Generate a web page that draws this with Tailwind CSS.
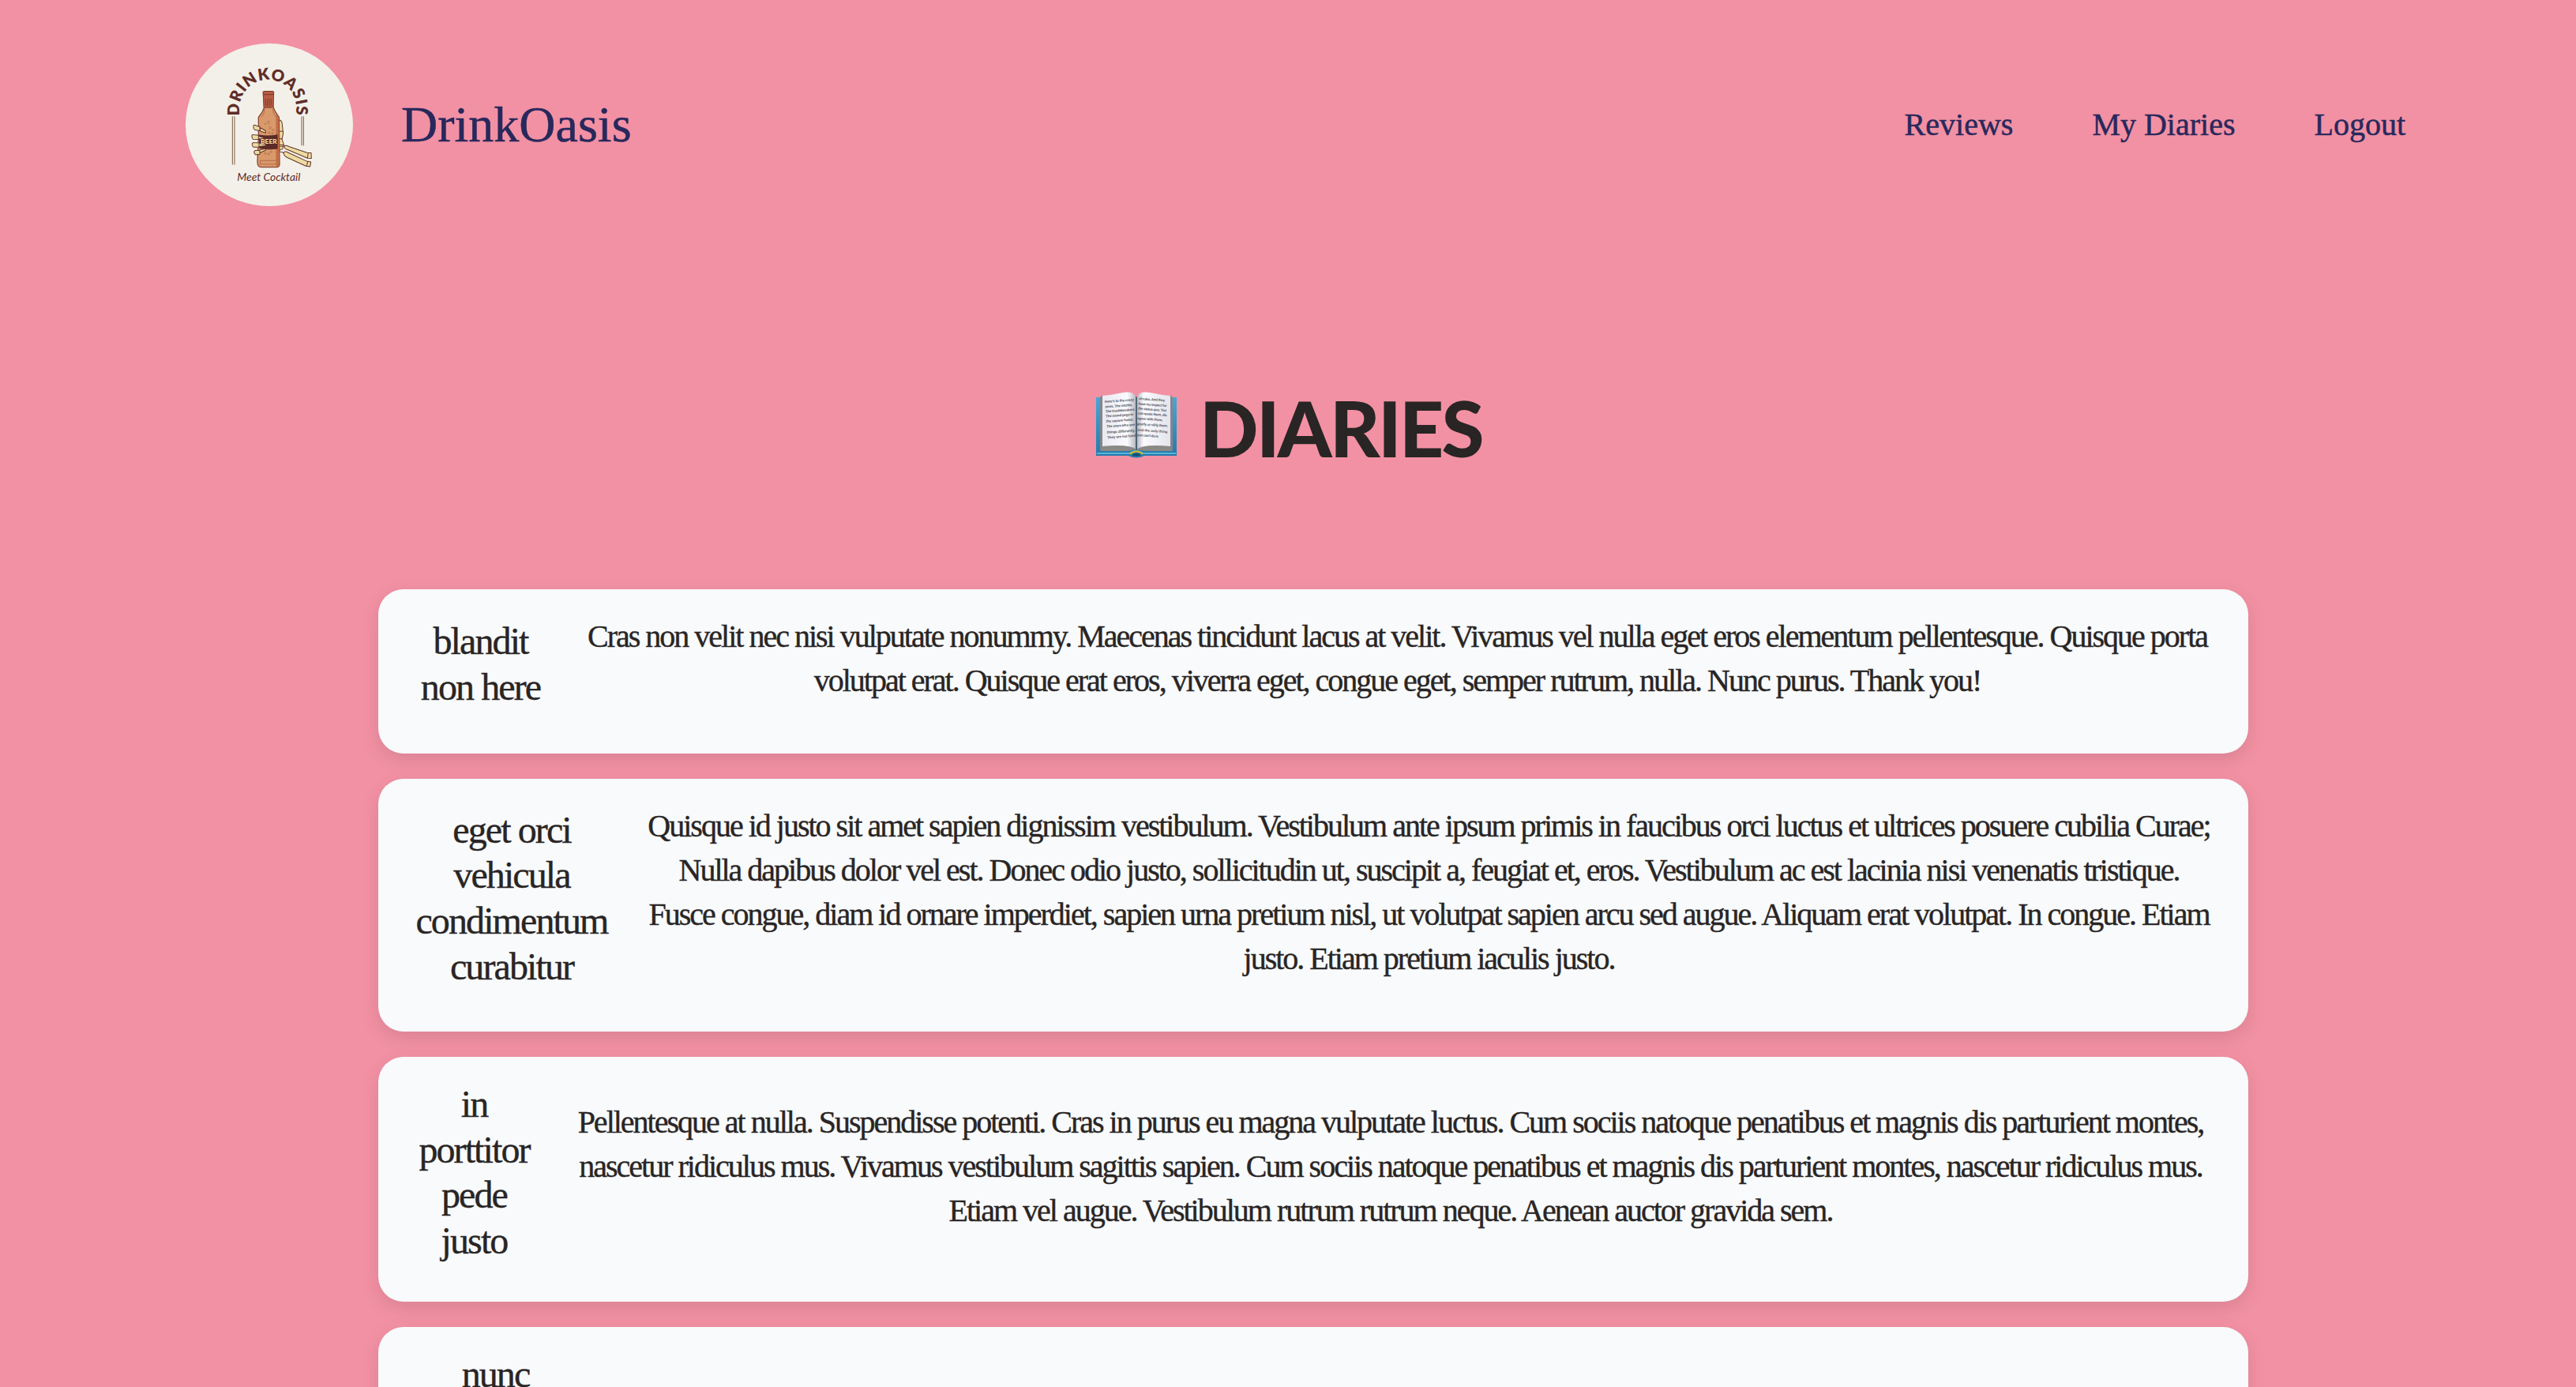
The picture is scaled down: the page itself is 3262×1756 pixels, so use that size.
<!DOCTYPE html>
<html lang="en">
<head>
<meta charset="utf-8">
<title>DrinkOasis</title>
<script src="https://cdn.jsdelivr.net/npm/@tailwindcss/browser@4"></script>
</head>
<body class="h-screen overflow-hidden bg-[#f291a3] font-['Liberation_Serif',serif] text-[#292524]">
<header class="flex h-[316px] items-center justify-between pl-[235px] pr-[216px] text-[#28285c] [-webkit-text-stroke:0.5px_#28285c]">
  <a class="flex items-center gap-[61px]">
    <svg class="h-[206px] w-[212px] [-webkit-text-stroke:0]" viewBox="46 45 636 617" preserveAspectRatio="none">
      <ellipse cx="364" cy="353.500" rx="318" ry="308.500" fill="#f3f0e9"/>
      <path id="arc" d="M251 319V291A108 108 0 0 1 467 291V319" fill="none"/>
      <text font-family="Lato" font-weight="800" font-size="61" fill="#5f2d28" textLength="392"><textPath href="#arc" textLength="392">DRINKOASIS</textPath></text>
      <g stroke="#7d5d45" stroke-width="3"><path d="M224 321V505M232 321V505M487 321V432M494 321V432"/></g>
      <g stroke="#63322b" stroke-width="3" stroke-linejoin="round" stroke-linecap="round">
        <path d="M400 335C408 336 413 343 413 352L417 386 412 408 419 428 414 446 400 450Z" fill="#ecdcA1"/>
        <path d="M402 378H415M402 407H413M403 430H418" fill="none"/>
        <path d="M421 434Q428 430 438 436L507 459 523 460 524 481 509 480 432 447Q420 444 421 434Z" fill="#ecdca1"/>
        <path d="M418 459Q425 452 436 459L505 491 522 494 519 512 503 510 431 477Q419 471 418 459Z" fill="#ecdca1"/>
        <path d="M401 437L421 434M402 455L418 459M512 460L509 479M510 493L506 510" fill="none"/>
        <path d="M341 239L345 286 338 304 323 325 323 400 319 492Q319 513 331 514H393Q404 513 403 500L401 325 387 304 379 286 379 239Z" fill="#d9996a" stroke="#8d4633" stroke-width="4"/>
        <path d="M390 312L400 328 402 500Q400 512 392 512L389 500V330Z" fill="#b9633f" stroke="none" opacity=".75"/>
        <path d="M341 237L343 286Q361 291 379 286L381 237Z" fill="#b65b42" stroke="#8d4633"/>
        <rect x="340" y="226" width="41" height="13" rx="5" fill="#b65b42" stroke="#7b382d"/>
        <path d="M350 256V280M357 256V282M364 256V282M371 256V280" stroke-width="2"/>
        <path d="M347 292Q347 308 335 324M376 292Q378 310 388 322M331 489H388M331 489L329 503H390" stroke="#9d593d" stroke-width="2" fill="none"/>
        <path d="M325 391Q360 398 396 390V445Q360 450 326 443Z" fill="#5c2b26" stroke="none"/>
        <path d="M304 357Q308 352 315 357L328 361 330 377 308 372Q302 366 304 357ZM328 364L350 376 350 384 328 377ZM298 393Q302 389 309 392L323 393V409L302 408Q296 401 298 393ZM323 397L342 402 341 407 323 407ZM299 424Q304 419 311 422L325 422V438L303 438Q297 431 299 424ZM325 424L350 427V433L325 436ZM307 454Q311 449 317 451L328 451V465L312 467Q305 462 307 454ZM328 449L350 444 350 450 328 460Z" fill="#ecdca1"/>
      </g>
      <g fill="#e8b984" stroke="#9d593d" stroke-width="2"><circle cx="361" cy="344" r="4"/><circle cx="349" cy="350" r="2"/><circle cx="367" cy="365" r="4"/><circle cx="379" cy="373" r="3"/><circle cx="364" cy="384" r="3"/><circle cx="376" cy="386" r="3"/><circle cx="371" cy="456" r="3"/><circle cx="361" cy="464" r="3"/><circle cx="349" cy="462" r="3"/></g>
      <text x="331" y="426" font-family="Lato" font-weight="900" font-size="24" fill="#ecdca1" textLength="62" lengthAdjust="spacingAndGlyphs">BEER</text>
      <text x="242" y="567" font-family="Lato" font-weight="400" font-style="italic" font-size="40" fill="#5f2d28" textLength="240" lengthAdjust="spacingAndGlyphs">Meet Cocktail</text>
    </svg>
    <span class="text-[64px] leading-[76px]">DrinkOasis</span>
  </a>
  <nav class="flex gap-[100px] text-[40px] leading-[56px]">
    <a>Reviews</a><a>My Diaries</a><a>Logout</a>
  </nav>
</header>

<main class="flex flex-col">
  <h1 class="flex h-[430px] items-start gap-[29px] pt-[180px] pl-[1388px] font-['Lato',sans-serif] text-[98px] leading-[82px] font-black tracking-[-2.7px]">
    <svg class="h-[84px] w-[102px] tracking-normal" viewBox="0 0 102 84">
      <defs>
        <linearGradient id="cover" x2="0" y2="1"><stop stop-color="#46a8d8"/><stop offset="1" stop-color="#2279a8"/></linearGradient>
        <linearGradient id="left"><stop stop-color="#e9e9f0"/><stop offset=".75" stop-color="#fafaff"/><stop offset="1" stop-color="#b9b9c2"/></linearGradient>
        <linearGradient id="right"><stop stop-color="#b9b9c2"/><stop offset=".2" stop-color="#fafaff"/><stop offset="1" stop-color="#e4e4ec"/></linearGradient>
      </defs>
      <path d="M0 7H102V81H61Q51 86 41 81H0Z" fill="url(#cover)"/>
      <path d="M1 78H42Q51 72 60 78H101" fill="none" stroke="#6cc3ea" stroke-width="1.500"/>
      <path d="M5 7L8 4V71L5 74ZM97 7L94 4V71L97 74Z" fill="#85858a"/>
      <path d="M5 75L9 68Q35 66 45 70L51 74 57 70Q67 66 93 68L97 75H62Q51 72 41 75Z" fill="#8a8986"/>
      <path d="M8 5Q20 4 34 1Q47-1 50 6V73Q43 66 8 69Z" fill="url(#left)"/>
      <path d="M94 5Q82 4 68 1Q55-1 52 6V73Q59 66 94 69Z" fill="url(#right)"/>
      <path d="M51 6V74" stroke="#55555b" stroke-width="1.500"/>
      <path d="M43 79Q51 72 59 79" fill="none" stroke="#d7b51d" stroke-width="2"/><path d="M45 80Q51 76 57 80Q51 83 45 80Z" fill="#154d6e"/>
      <g font-family="Liberation Sans" font-weight="700" font-size="4.500" fill="#55555c">
        <g transform="rotate(-4 11 13)"><text x="11" y="14" textLength="37">Here’s to the crazy</text><text x="11" y="20.500" textLength="35">ones. The misfits.</text><text x="11" y="26.500" textLength="37">The troublemakers</text><text x="11" y="32.500" textLength="35">The round pegs in</text><text x="11" y="39" textLength="35">the square holes.</text><text x="11" y="45.500" textLength="36">The ones who see</text><text x="11" y="53" textLength="36">things differently.</text><text x="11" y="59.500" textLength="36">They are not fond</text></g>
        <g transform="rotate(4 53 10)"><text x="54" y="10" textLength="33">of rules. And they</text><text x="54" y="16.500" textLength="36">have no respect for</text><text x="54" y="22.500" textLength="36">the status quo. You</text><text x="54" y="28.500" textLength="37">can quote them, dis</text><text x="54" y="35" textLength="32">agree with them,</text><text x="54" y="42" textLength="39">glorify or vilify them.</text><text x="55" y="49.500" textLength="38">and the only thing</text><text x="55" y="56" textLength="27">you can’t do is</text></g>
      </g>
    </svg>
    <span class="pt-[4px]">DIARIES</span>
  </h1>

  <section class="ml-[479px] flex w-[2368px] flex-col gap-8 text-center whitespace-nowrap [-webkit-text-stroke:0.4px_#292524]">
    <article class="flex items-center rounded-[32px] bg-[#f8fafc] px-12 py-8 shadow-[0_8px_24px_rgba(0,0,0,0.1)]">
      <h2 class="-mt-px mr-[50px] mb-[17px] w-[163px] shrink-0 text-[48px] leading-[57.6px] tracking-[-1.9px]">blandit<br>non here</h2>
      <p class="mb-8 flex-1 text-[40px] leading-[56px] tracking-[-2px]">Cras non velit nec nisi vulputate nonummy. Maecenas tincidunt lacus at velit. Vivamus vel nulla eget eros elementum pellentesque. Quisque porta<br>volutpat erat. Quisque erat eros, viverra eget, congue eget, semper rutrum, nulla. Nunc purus. Thank you!</p>
    </article>
    <article class="flex items-center rounded-[32px] bg-[#f8fafc] px-12 py-8 shadow-[0_8px_24px_rgba(0,0,0,0.1)]">
      <h2 class="-mt-px mr-[50px] -ml-px mb-[17px] w-[244px] shrink-0 text-[48px] leading-[57.6px] tracking-[-1.9px]">eget orci<br>vehicula<br>condimentum<br>curabitur</h2>
      <p class="mb-8 flex-1 text-[40px] leading-[56px] tracking-[-2px]">Quisque id justo sit amet sapien dignissim vestibulum. Vestibulum ante ipsum primis in faucibus orci luctus et ultrices posuere cubilia Curae;<br>Nulla dapibus dolor vel est. Donec odio justo, sollicitudin ut, suscipit a, feugiat et, eros. Vestibulum ac est lacinia nisi venenatis tristique.<br>Fusce congue, diam id ornare imperdiet, sapien urna pretium nisl, ut volutpat sapien arcu sed augue. Aliquam erat volutpat. In congue. Etiam<br>justo. Etiam pretium iaculis justo.</p>
    </article>
    <article class="flex items-center rounded-[32px] bg-[#f8fafc] px-12 py-8 shadow-[0_8px_24px_rgba(0,0,0,0.1)]">
      <h2 class="-mt-px mr-[49px] mb-[17px] w-[147px] shrink-0 text-[48px] leading-[57.6px] tracking-[-1.9px]">in<br>porttitor<br>pede<br>justo</h2>
      <p class="mb-8 flex-1 text-[40px] leading-[56px] tracking-[-2px]">Pellentesque at nulla. Suspendisse potenti. Cras in purus eu magna vulputate luctus. Cum sociis natoque penatibus et magnis dis parturient montes,<br>nascetur ridiculus mus. Vivamus vestibulum sagittis sapien. Cum sociis natoque penatibus et magnis dis parturient montes, nascetur ridiculus mus.<br>Etiam vel augue. Vestibulum rutrum rutrum neque. Aenean auctor gravida sem.</p>
    </article>
    <article class="flex h-[320px] items-start rounded-[32px] bg-[#f8fafc] px-12 py-8 shadow-[0_8px_24px_rgba(0,0,0,0.1)]">
      <h2 class="-mt-px w-[201px] text-[48px] leading-[57.6px] tracking-[-1.9px]">nunc</h2>
    </article>
  </section>
</main>
</body>
</html>
